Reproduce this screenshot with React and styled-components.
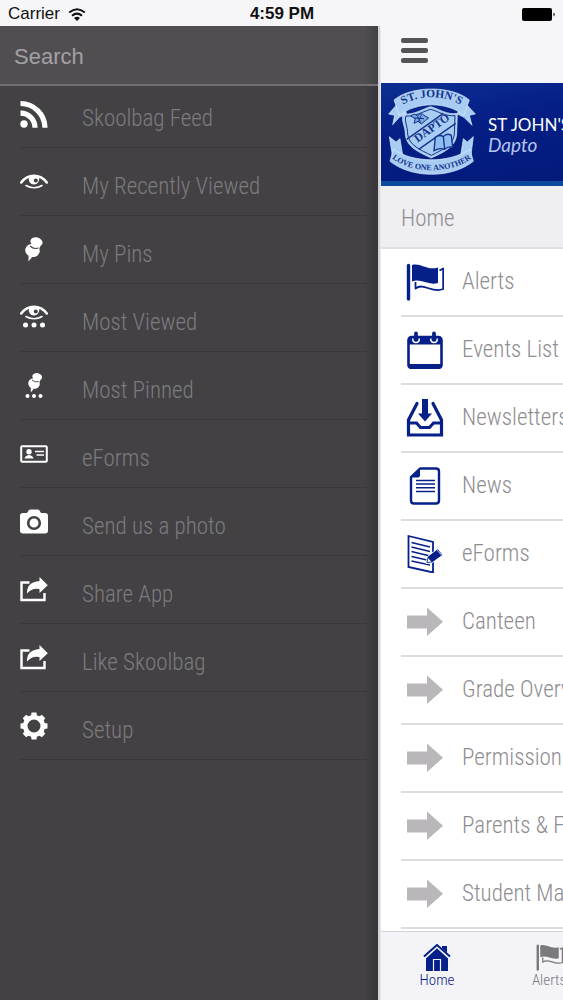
import React from "react"
import styled, { createGlobalStyle } from "styled-components"

const GlobalStyle = createGlobalStyle`
    * {
        box-sizing: border-box;
    }

    body {
        margin: 0;
        background: #434144;
        font-family: "Roboto Condensed", "Liberation Sans Narrow", Roboto, sans-serif;
        font-weight: 300;
    }
`
const Screen = styled.div`
    display: flex;
    flex-direction: column;
    height: 100vh;
    overflow: hidden;
`
const StatusBar = styled.header`
    display: grid;
    grid-template-columns: 1fr auto 1fr;
    align-items: center;
    flex: none;
    height: 26px;
    padding: 2px 7px 0 8px;
    background: #f6f5f8;
    color: #111111;
    font: 400 17px/20px "Liberation Sans", Arial, sans-serif;
`
const Carrier = styled.div`
    display: flex;
    align-items: center;
    gap: 8px;
`
const Clock = styled.time`
    font-weight: 700;
`
const Battery = styled.svg`
    justify-self: end;
`
const Panels = styled.div`
    display: grid;
    grid-template-columns: 27fr 13fr;
    flex: 1;
    min-height: 0;
`
const Drawer = styled.aside`
    min-width: 0;
    border-right: 2px solid #d3d2d6;
    background: linear-gradient(to left, #38363a 0, #434144 14px);
`
const SearchInput = styled.input`
    display: block;
    width: 100%;
    height: 60px;
    padding: 4px 14px 0;
    border: 0;
    border-bottom: 2px solid #716f73;
    border-radius: 0;
    outline: none;
    background: linear-gradient(to left, #434144 0, #504e51 14px);
    color: #ffffff;
    font: 400 22px "Liberation Sans", Arial, sans-serif;

    &::placeholder {
        color: #a3a1a5;
        opacity: 1;
    }
`
const MenuList = styled.ul`
    display: flex;
    flex-direction: column;
    gap: 6px;
    margin: 0;
    padding: 0 11px 0 20px;
    list-style: none;
`
const MenuLink = styled.a`
    display: grid;
    grid-template-columns: 28px 1fr;
    gap: 34px;
    align-items: center;
    height: 62px;
    border-bottom: 1px solid #39373a;
    color: #7d7b7f;
    font-size: 23px;
    line-height: 28px;
    text-decoration: none;

    svg {
        margin-bottom: 6px;
    }
`
const MenuLabel = styled.span`
    padding-top: 4px;
`
const Page = styled.main`
    display: flex;
    flex-direction: column;
    min-width: 0;
    overflow: hidden;
    background: #ffffff;
    border-left: 1px solid #e9e8ec;
`
const TopBar = styled.div`
    display: flex;
    align-items: center;
    flex: none;
    height: 57px;
    padding: 0 20px 8px;
    background: #f6f5f8;
`
const MenuButton = styled.button`
    display: flex;
    flex-direction: column;
    gap: 5px;
    width: 27px;
    padding: 0;
    border: 0;
    background: none;
    cursor: pointer;
`
const Bar = styled.span`
    height: 5px;
    border-radius: 2px;
    background: #555357;
`
const Banner = styled.section`
    display: flex;
    align-items: center;
    gap: 11px;
    flex: none;
    height: 103px;
    padding: 0 7px;
    border-bottom: 5px solid #0b4a9c;
    background: linear-gradient(170deg, #0c2f92 0, #051f86 40%, #031a7a 100%);
    color: #ffffff;
    font-family: Lato, sans-serif;
    white-space: nowrap;

    svg {
        flex: none;
    }
`
const School = styled.h1`
    margin: 0;
    padding-top: 6px;
    font-size: 17px;
    line-height: 20px;
    font-weight: 400;
`
const Suburb = styled.p`
    margin: 0;
    color: #b4c4ee;
    font-size: 19px;
    line-height: 20px;
    font-weight: 400;
    font-style: italic;
`
const Heading = styled.h2`
    flex: none;
    margin: 0;
    padding: 17px 20px 12px;
    border-bottom: 2px solid #e0dfe2;
    background: #efeef0;
    color: #8f8d91;
    font-size: 23px;
    line-height: 32px;
    font-weight: 300;
`
const PageList = styled.ul`
    flex: 1;
    min-height: 0;
    margin: 0;
    padding: 0 0 0 20px;
    overflow: hidden;
    list-style: none;
`
const PageLink = styled.a`
    display: flex;
    align-items: center;
    gap: 18px;
    height: 68px;
    padding-left: 5px;
    border-bottom: 2px solid #dcdbde;
    color: #8f8d91;
    font-size: 23px;
    line-height: 28px;
    white-space: nowrap;
    text-decoration: none;

    svg {
        flex: none;
        color: ${(props) => (props.$muted ? "#b9b7ba" : "#06208a")};
    }
`
const TabBar = styled.nav`
    display: flex;
    flex: none;
    height: 69px;
    border-top: 1px solid #d3d2d6;
    background: #f4f3f7;
`
const Tab = styled.a`
    display: flex;
    flex-direction: column;
    align-items: center;
    flex: 0 0 112px;
    padding-top: 12px;
    color: ${(props) => (props.$active ? "#06208a" : "#7b797d")};
    font-size: 15px;
    line-height: 18px;
    text-decoration: none;
`

const EyeShape = () => (
    <g>
        <path d="M1.200 9.500C8 .5 20 .5 26.800 9.500" fill="none" stroke="#fff" strokeWidth="2.500" strokeLinecap="round" />
        <path d="M6 12.500C10.500 15.500 17.500 15.500 22 12.500" fill="none" stroke="#fff" strokeWidth="1.600" strokeLinecap="round" />
        <path d="M9 4.500A5.300 5.300 0 1 0 19.200 5Q14 1.500 9 4.500Z" fill="#fff" />
        <circle cx="15.800" cy="7.500" r="2" fill="#434144" />
    </g>
)
const PinShape = () => (
    <g fill="#fff">
        <ellipse cx="16.500" cy="6" rx="6.200" ry="4.600" transform="rotate(14 16.500 6)" />
        <path d="M11.500 8L20.500 10L18.500 14L9.500 12Z" />
        <ellipse cx="12.500" cy="14.500" rx="7.300" ry="6.500" transform="rotate(14 12.500 14.500)" />
        <path d="M8.500 20L12.500 20.500L8.500 25.500Z" />
        <path d="M10 10Q13.500 13.500 18.500 12" fill="none" stroke="#434144" strokeWidth="1.100" />
    </g>
)
const Dots = ({ y, gap, r }) => (
    <g fill="#fff">
        <circle cx={14 - gap} cy={y} r={r} />
        <circle cx="14" cy={y} r={r} />
        <circle cx={14 + gap} cy={y} r={r} />
    </g>
)
const MenuSvg = ({ children }) => (
    <svg width="28" height="28" viewBox="0 0 28 28" aria-hidden="true">{children}</svg>
)
const FeedIcon = () => (
    <MenuSvg>
        <circle cx="4" cy="24" r="3.700" fill="#fff" />
        <path d="M0.500 13.200A14.500 14.500 0 0 1 15 27.700M0.500 3.500A24.500 24.500 0 0 1 25 27.700" fill="none" stroke="#fff" strokeWidth="5.200" />
    </MenuSvg>
)
const EyeIcon = () => <MenuSvg><g transform="translate(0 5)"><EyeShape /></g></MenuSvg>
const PinIcon = () => <MenuSvg><PinShape /></MenuSvg>
const MostViewedIcon = () => <MenuSvg><EyeShape /><Dots y={21} gap={8.5} r={2.500} /></MenuSvg>
const MostPinnedIcon = () => (
    <MenuSvg>
        <g transform="translate(4 0) scale(.8)"><PinShape /></g>
        <Dots y={24} gap={6.5} r={2} />
    </MenuSvg>
)
const CardIcon = () => (
    <MenuSvg>
        <rect x="1.200" y="6.200" width="25.600" height="15.600" rx="1" fill="none" stroke="#fff" strokeWidth="2" />
        <circle cx="9" cy="11.800" r="2.700" fill="#fff" />
        <path d="M4.500 18.500Q5 15.500 9 15Q13 15.500 13.500 18.500Z" fill="#fff" />
        <path d="M15 11.500H24M16.500 15H24" stroke="#fff" strokeWidth="1.300" />
    </MenuSvg>
)
const CameraIcon = () => (
    <MenuSvg>
        <path d="M3 5H7L8.500 2.500Q9.200 1.500 10.500 1.500H17.500Q18.800 1.500 19.500 2.500L21 5H25Q28 5 28 8V22.500Q28 25.500 25 25.500H3Q0 25.500 0 22.500V8Q0 5 3 5Z" fill="#fff" />
        <circle cx="14" cy="15" r="5.800" fill="none" stroke="#434144" strokeWidth="2.600" />
    </MenuSvg>
)
const ShareIcon = () => (
    <MenuSvg>
        <path d="M9.500 6.500H1.500V24H24.500V17" fill="none" stroke="#fff" strokeWidth="2.400" />
        <path d="M19.500 1L27.800 9.300L19.500 17V13Q12 11.500 7 17.500Q6.500 6 19.500 5Z" fill="#fff" />
    </MenuSvg>
)
const GearIcon = () => (
    <MenuSvg>
        <circle cx="14" cy="14" r="8.800" fill="none" stroke="#fff" strokeWidth="4.600" />
        {[0, 45, 90, 135, 180, 225, 270, 315].map((angle) => (
            <path key={angle} d="M10.800 5L11.600 0.500H16.400L17.200 5Z" fill="#fff" transform={`rotate(${angle} 14 14)`} />
        ))}
    </MenuSvg>
)

const PageSvg = ({ children, size = 38 }) => (
    <svg width={size} height={size} viewBox="0 0 38 38" aria-hidden="true">{children}</svg>
)
const FlagIcon = ({ size }) => (
    <PageSvg size={size}>
        <path d="M2.500 2.500V36" stroke="currentColor" strokeWidth="3.400" strokeLinecap="round" />
        <path d="M6 2C15 -.5 21 8 32 4.500V20C22 23 15 15 6 18.500Z" fill="currentColor" />
        <path d="M9.500 19V25.500C18 19 26 31 37.200 26V5.500L33.500 7.500M9.500 22" fill="none" stroke="currentColor" strokeWidth="1.800" strokeLinejoin="round" />
    </PageSvg>
)
const CalendarIcon = () => (
    <PageSvg>
        <rect x="2.500" y="6" width="33" height="31" rx="3" fill="none" stroke="currentColor" strokeWidth="2.600" />
        <path d="M3 6H35V13.500H3ZM3 33H35V37H3Z" fill="currentColor" />
        <path d="M6.800 7.500Q6.500 11.500 10 11.500Q13.500 11.500 13.200 7.500M24.800 7.500Q24.500 11.500 28 11.500Q31.500 11.500 31.200 7.500" fill="none" stroke="#fff" strokeWidth="1.500" />
        <path d="M10 2.500V8M28 2.500V8" stroke="currentColor" strokeWidth="3.800" strokeLinecap="round" />
    </PageSvg>
)
const InboxIcon = () => (
    <PageSvg>
        <path d="M19 0V16" stroke="currentColor" strokeWidth="6" />
        <path d="M12 14.500H26L19 22.500Z" fill="currentColor" />
        <path d="M11 4.500L2.500 21V36H35.500V21L27 4.500" fill="none" stroke="currentColor" strokeWidth="3.200" strokeLinecap="round" />
        <path d="M2 24H10.500L14.500 28.500H23.500L27.500 24H36" fill="none" stroke="currentColor" strokeWidth="3" />
    </PageSvg>
)
const DocumentIcon = () => (
    <PageSvg>
        <path d="M14 1.500H30Q33 1.500 33 4.500V33.500Q33 36.500 30 36.500H8Q5 36.500 5 33.500V10Z" fill="none" stroke="currentColor" strokeWidth="2.400" strokeLinejoin="round" />
        <path d="M4.500 10.500L14 1V8.500Q14 10.500 12 10.500Z" fill="currentColor" />
        <path d="M10 13.500H29M10 17H29M10 20.800H29M10 24.500H29" stroke="currentColor" strokeWidth="1.500" />
    </PageSvg>
)
const FormIcon = () => (
    <PageSvg>
        <path d="M2.500 1L27 7V37.500L2.500 32Z" fill="none" stroke="currentColor" strokeWidth="1.800" />
        <path d="M5.500 7.500L24 12M5.500 12L24 16.500M5.500 16.500L24 21M5.500 21.500L21 25M5.500 26L24 30" stroke="currentColor" strokeWidth="1.500" />
        <path d="M21.500 21.500L32 13.500L37 20L26.500 27.500L20 28.500Z" fill="currentColor" stroke="#fff" strokeWidth="1" />
        <path d="M31 14.500L35.500 20" stroke="#8d9bd0" strokeWidth="1.200" />
        <path d="M22 22.500L26 27L21 27.500Z" fill="#fff" stroke="currentColor" strokeWidth="0.700" />
    </PageSvg>
)
const ArrowIcon = () => (
    <PageSvg>
        <path d="M1 12.500H21V4.500L37 18.800L21 33V25.500H1Z" fill="currentColor" />
    </PageSvg>
)
const HomeIcon = () => (
    <svg width="28" height="27" viewBox="0 0 28 27" aria-hidden="true">
        <path d="M19 2H24V10L19 6Z" fill="currentColor" />
        <path d="M3 13L14 3L25 13V27H3Z" fill="currentColor" />
        <path d="M2 13L14 2L26 13" fill="none" stroke="#f4f3f7" strokeWidth="3.500" />
        <path d="M1 12.500L14 1L27 12.500" fill="none" stroke="currentColor" strokeWidth="2" />
        <path d="M10.500 27V15.500H17.500V27" fill="none" stroke="#f4f3f7" strokeWidth="1.200" />
    </svg>
)

const Crest = () => (
    <svg width="89" height="88" viewBox="0 0 267 264" role="img" aria-label="School crest">
        <g fill="#a9cdf2" stroke="#dcecff" strokeWidth="2">
            <path d="M30 46L2 78L20 82L14 110L34 88L56 78L46 50Z" />
            <path d="M232 46L262 78L244 82L252 112L228 88L208 78L218 50Z" />
            <path d="M4 146L24 162L36 152L46 214L14 208Z" />
            <path d="M256 146L238 162L226 152L216 214L248 208Z" />
            <path d="M18 36C70 -8 192 -8 244 36L228 82C176 40 88 40 34 82Z" />
            <path d="M46 78C78 82 104 62 128 56C152 62 178 82 208 76L206 138C204 178 164 194 130 210C96 194 54 178 52 138C52 114 38 98 46 78Z" />
            <path d="M16 184C80 226 180 226 246 184L256 220C190 272 72 272 6 220Z" />
        </g>
        <path d="M54 84C82 86 106 70 128 64C150 70 174 86 201 83L199 138C197 171 160 187 130 202C100 187 61 171 59 138C59 114 48 100 54 84Z" fill="none" stroke="#12328f" strokeWidth="3" />
        <path d="M56 154L166 76M92 184L203 106" stroke="#12328f" strokeWidth="4" />
        <path d="M142 148Q154 138 166 146Q176 134 190 142L194 178Q180 174 170 184Q156 178 138 188ZM166 146L170 184" fill="#8fbdf0" stroke="#12328f" strokeWidth="4" />
        <path d="M68 84Q80 74 88 84Q100 72 108 82L122 90L112 98L100 108L90 100L78 106L82 92ZM78 90L108 92M88 84L98 104M100 82L92 98" fill="#7da9de" stroke="#12328f" strokeWidth="3" />
        <path id="crest-top" d="M36 57C84 18 178 18 226 57" fill="none" />
        <path id="crest-mid" d="M76 173L205 81" fill="none" />
        <path id="crest-low" d="M10 210C74 259 188 259 252 210" fill="none" />
        <g fill="#12328f" fontFamily="Liberation Serif, serif" fontWeight="700" textAnchor="middle">
            <text fontSize="34"><textPath href="#crest-top" startOffset="50%">ST. JOHN'S</textPath></text>
            <text fontSize="35"><textPath href="#crest-mid" startOffset="48%">DAPTO</textPath></text>
            <text fontSize="24"><textPath href="#crest-low" startOffset="50%">LOVE ONE ANOTHER</textPath></text>
        </g>
    </svg>
)

const menuItems = [
    { label: "Skoolbag Feed", Icon: FeedIcon },
    { label: "My Recently Viewed", Icon: EyeIcon },
    { label: "My Pins", Icon: PinIcon },
    { label: "Most Viewed", Icon: MostViewedIcon },
    { label: "Most Pinned", Icon: MostPinnedIcon },
    { label: "eForms", Icon: CardIcon },
    { label: "Send us a photo", Icon: CameraIcon },
    { label: "Share App", Icon: ShareIcon },
    { label: "Like Skoolbag", Icon: ShareIcon },
    { label: "Setup", Icon: GearIcon },
]

const pageItems = [
    { label: "Alerts", Icon: FlagIcon },
    { label: "Events List", Icon: CalendarIcon },
    { label: "Newsletters", Icon: InboxIcon },
    { label: "News", Icon: DocumentIcon },
    { label: "eForms", Icon: FormIcon },
    { label: "Canteen", Icon: ArrowIcon, muted: true },
    { label: "Grade Overviews", Icon: ArrowIcon, muted: true },
    { label: "Permission Notes", Icon: ArrowIcon, muted: true },
    { label: "Parents & Friends", Icon: ArrowIcon, muted: true },
    { label: "Student Matters", Icon: ArrowIcon, muted: true },
]

export default function App() {
    const [query, setQuery] = React.useState("")

    return (
        <Screen>
            <GlobalStyle />
            <StatusBar>
                <Carrier>
                    Carrier
                    <svg width="18" height="13" viewBox="0 0 18 13" aria-label="Wi-Fi">
                        <path d="M1.200 4.500Q9 -2 16.800 4.500M4 7.700Q9 3.500 14 7.700" fill="none" stroke="#111" strokeWidth="2" />
                        <path d="M6 10Q9 7.500 12 10L9 13Z" fill="#111" />
                    </svg>
                </Carrier>
                <Clock>4:59 PM</Clock>
                <Battery width="34" height="13" viewBox="0 0 34 13" aria-label="Battery full">
                    <rect width="30" height="13" rx="2" fill="#000" />
                    <path d="M31.500 4.500Q34 6.500 31.500 8.500Z" fill="#000" />
                </Battery>
            </StatusBar>

            <Panels>
                <Drawer>
                    <SearchInput
                        type="search"
                        aria-label="Search"
                        placeholder="Search"
                        value={query}
                        onChange={(event) => setQuery(event.target.value)}
                    />
                    <MenuList>
                        {menuItems.map(({ label, Icon }) => (
                            <li key={label}>
                                <MenuLink href="#">
                                    <Icon />
                                    <MenuLabel>{label}</MenuLabel>
                                </MenuLink>
                            </li>
                        ))}
                    </MenuList>
                </Drawer>

                <Page>
                    <TopBar>
                        <MenuButton type="button" aria-label="Toggle menu">
                            <Bar />
                            <Bar />
                            <Bar />
                        </MenuButton>
                    </TopBar>
                    <Banner>
                        <Crest />
                        <div>
                            <School>ST JOHN'S</School>
                            <Suburb>Dapto</Suburb>
                        </div>
                    </Banner>
                    <Heading>Home</Heading>
                    <PageList>
                        {pageItems.map(({ label, Icon, muted }) => (
                            <li key={label}>
                                <PageLink href="#" $muted={muted}>
                                    <Icon />
                                    {label}
                                </PageLink>
                            </li>
                        ))}
                    </PageList>
                    <TabBar>
                        <Tab href="#" $active><HomeIcon />Home</Tab>
                        <Tab href="#"><FlagIcon size={27} />Alerts</Tab>
                    </TabBar>
                </Page>
            </Panels>
        </Screen>
    )
}
